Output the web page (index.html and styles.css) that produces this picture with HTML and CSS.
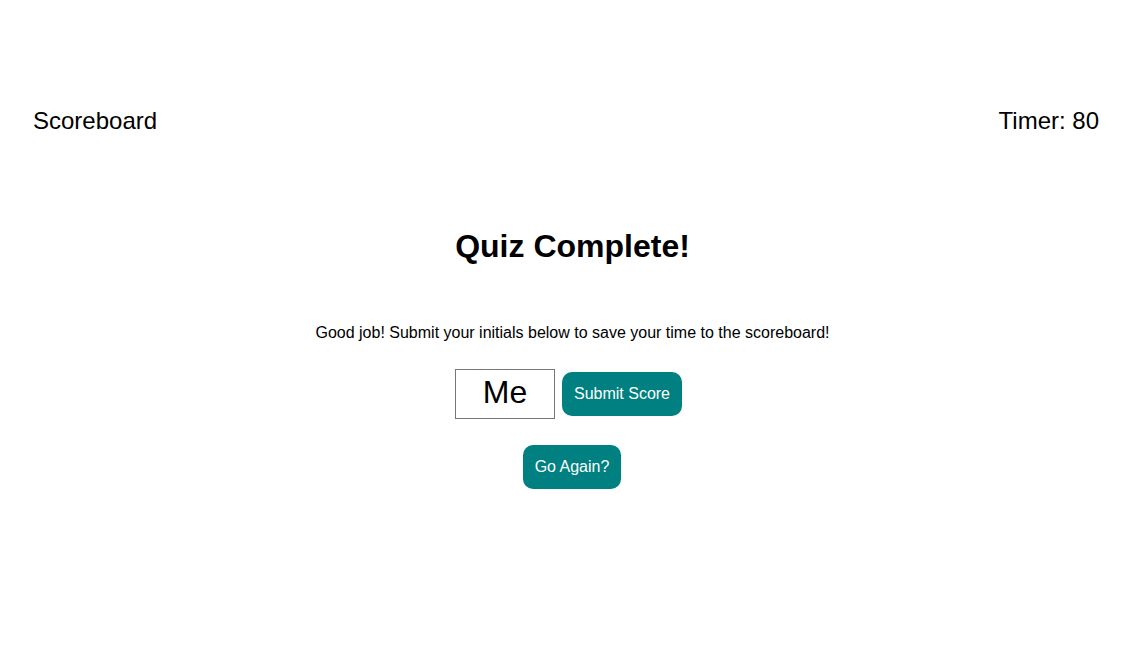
FILE: index.html
```html
<!DOCTYPE html>
<html lang="en">
<head>
<meta charset="utf-8">
<title>Quiz Complete</title>
<link rel="stylesheet" href="styles.css">
</head>
<body>
<header class="top-bar">
  <a class="nav-link">Scoreboard</a>
  <span class="timer">Timer: 80</span>
</header>
<main class="content">
  <h1 class="title">Quiz Complete!</h1>
  <p class="message">Good job! Submit your initials below to save your time to the scoreboard!</p>
  <form class="score-form">
    <input class="initials" type="text" value="Me">
    <button class="btn btn-submit" type="button">Submit Score</button>
  </form>
  <div class="again-row">
    <button class="btn btn-again" type="button">Go Again?</button>
  </div>
</main>
</body>
</html>
```
FILE: styles.css
```css
html, body {
  margin: 0;
  padding: 0;
  background: #ffffff;
  color: #000000;
  font-family: "Liberation Sans", Arial, sans-serif;
}

.top-bar {
  display: flex;
  justify-content: space-between;
  align-items: center;
  padding: 107px 38px 0 33px;
  font-size: 24px;
  line-height: normal;
}

.nav-link {
  color: #000;
  text-decoration: none;
}

.content {
  display: flex;
  flex-direction: column;
  align-items: center;
  padding-left: 8px;
}

.title {
  margin: 93px 0 0;
  font-size: 32px;
  font-weight: bold;
  line-height: normal;
}

.message {
  margin: 59px 0 0;
  font-size: 16px;
  line-height: normal;
}

.score-form {
  display: flex;
  align-items: center;
  gap: 7px;
  margin: 27px 0 0 -8px;
}

.initials {
  box-sizing: border-box;
  width: 100px;
  height: 50px;
  border: 1px solid #767676;
  padding: 0 4px 3px;
  font-family: "Liberation Sans", Arial, sans-serif;
  font-size: 32px;
  text-align: center;
  color: #000;
  outline: none;
}

.btn {
  box-sizing: border-box;
  height: 44px;
  border: none;
  border-radius: 10px;
  background: #008080;
  color: #ffffff;
  font-family: "Liberation Sans", Arial, sans-serif;
  font-size: 16px;
  cursor: pointer;
}

.btn-submit {
  width: 120px;
}

.again-row {
  margin: 26px 0 0 -1px;
}

.btn-again {
  width: 98px;
}
```
